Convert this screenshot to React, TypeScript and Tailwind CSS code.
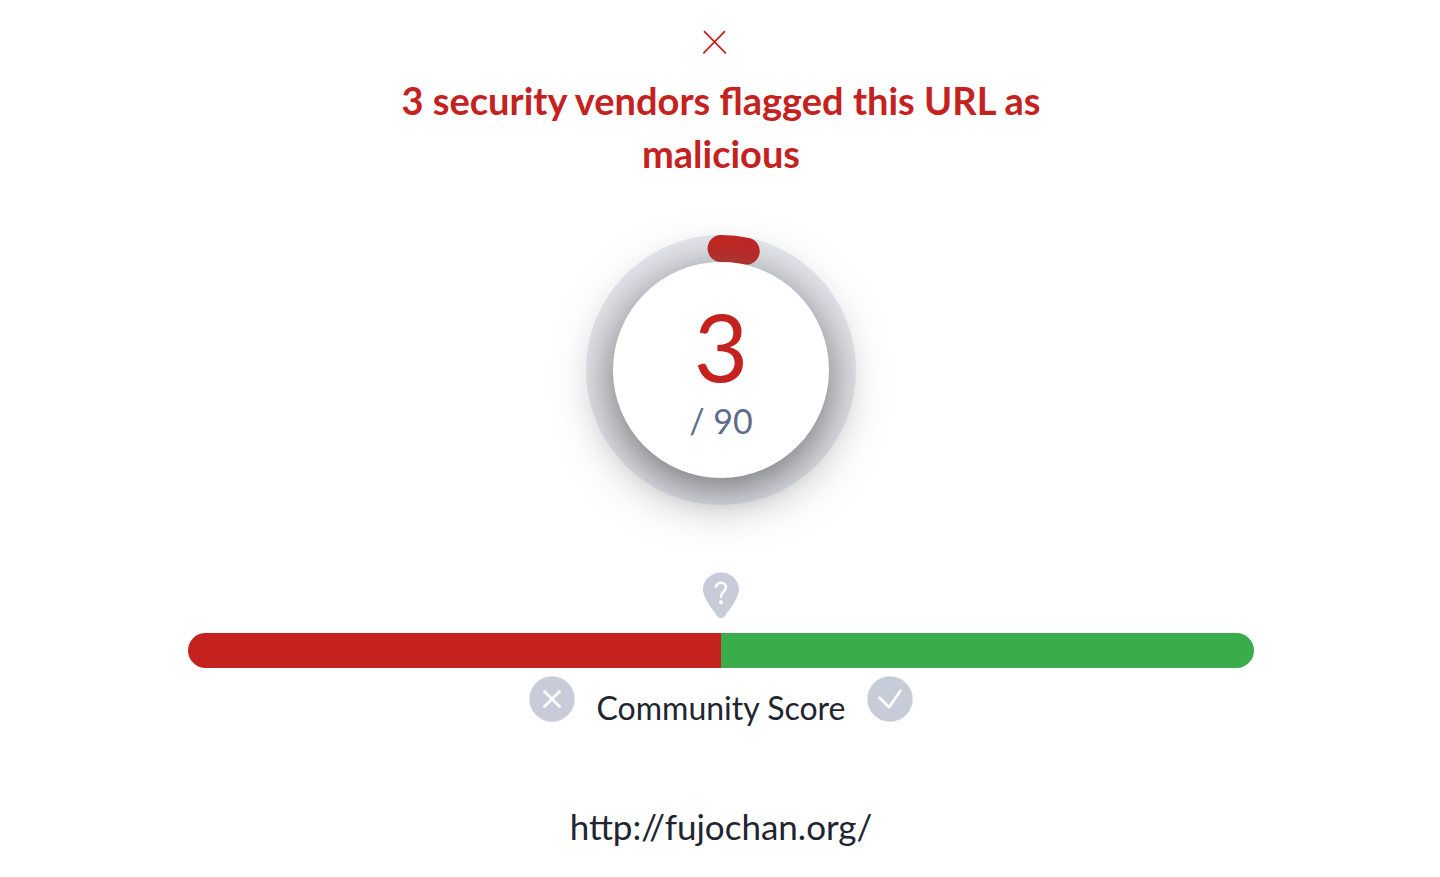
const TOTAL_ENGINES = 90;
const DETECTIONS = 3;

function CloseIcon() {
  return (
    <svg
      className="h-6 w-6"
      viewBox="0 0 24 24"
      fill="none"
      stroke="#c5221f"
      strokeWidth="1.7"
      aria-hidden="true"
    >
      <path d="M0.4 23.4 L22 1.2 M1 1.2 L22.8 23.4" />
    </svg>
  );
}

function DetectionRing({ value, total }: { value: number; total: number }) {
  const radius = 121.5;
  const circumference = 2 * Math.PI * radius;
  const arc = (value / total) * circumference;

  return (
    <div className="relative h-[270px] w-[270px]">
      <svg
        className="h-[270px] w-[270px]"
        viewBox="0 0 270 270"
        fill="none"
        aria-hidden="true"
      >
        <circle cx="135" cy="135" r={radius} stroke="#e8eaf1" strokeWidth="27" />
        <circle
          cx="135"
          cy="135"
          r={radius}
          stroke="#c5221f"
          strokeWidth="27"
          strokeLinecap="round"
          strokeDasharray={`${arc} ${circumference}`}
          transform="rotate(-90 135 135)"
        />
      </svg>
      {/* Score disc, its shadow falls over the ring */}
      <div className="absolute inset-[27px] flex flex-col items-center rounded-full bg-white pt-[30px] shadow-[0_12px_54px_#646464]">
        <div className="text-[94px] leading-[108px] text-[#c5221f]">{value}</div>
        <div className="text-[34px] leading-[42px] text-[#5f6b8a]">
          / {total}
        </div>
      </div>
    </div>
  );
}

function PinIcon() {
  return (
    <svg className="h-[46px] w-9" viewBox="0 0 36 46" fill="none" aria-hidden="true">
      <path
        d="M18 0.5C8 0.5 0 8.2 0 17.6C0 25.5 8.5 36.5 14.6 44.4C16.5 46.6 19.5 46.6 21.4 44.4C27.5 36.5 36 25.5 36 17.6C36 8.2 28 0.5 18 0.5Z"
        fill="#c8ccd8"
      />
      <path
        d="M13 14.8C13.6 12.2 15.5 10.8 18 10.8C20.9 10.8 23 12.7 23 15.4C23 19.4 18 19.9 18 24.8"
        stroke="#fff"
        strokeWidth="2.6"
        strokeLinecap="round"
      />
      <circle cx="18" cy="30.3" r="2" fill="#fff" />
    </svg>
  );
}

function VoteIcon({ path }: { path: string }) {
  return (
    <svg className="h-[46px] w-[46px]" viewBox="0 0 46 46" fill="none" aria-hidden="true">
      <circle cx="23" cy="23" r="22.7" fill="#c8ccd8" />
      <path
        d={path}
        stroke="#fff"
        strokeWidth="2.8"
        strokeLinecap="round"
        strokeLinejoin="round"
      />
    </svg>
  );
}

export default function App() {
  return (
    <main className="flex flex-col items-center bg-white pt-[30px] pb-6 pl-0.5 font-['Lato','Open_Sans',sans-serif] text-[#202530]">
      <button type="button" aria-label="Close" className="mr-3">
        <CloseIcon />
      </button>

      <h1 className="mt-5 max-w-[700px] text-center text-[38px] leading-[53px] font-bold text-[#c5221f]">
        {DETECTIONS} security vendors flagged this URL as malicious
      </h1>

      <div className="mt-[55px]">
        <DetectionRing value={DETECTIONS} total={TOTAL_ENGINES} />
      </div>

      <div className="mt-[67px]">
        <PinIcon />
      </div>

      <div className="mt-[15px] w-full px-[186px]">
        <div className="flex h-[35px] overflow-hidden rounded-full">
          <div className="flex-1 bg-[#c5221f]" />
          <div className="flex-1 bg-[#3bac4b]" />
        </div>
      </div>

      <div className="mt-2 flex items-start gap-[22px]">
        <button type="button" aria-label="Vote malicious">
          <VoteIcon path="M15.5 15.5L30.5 30.5M30.5 15.5L15.5 30.5" />
        </button>
        <span className="pt-3 text-[32px] leading-[40px]">Community Score</span>
        <button type="button" aria-label="Vote harmless">
          <VoteIcon path="M12.5 21.8L22 31.3L33.5 14.8" />
        </button>
      </div>

      <a href="http://fujochan.org/" className="mt-[74px] text-[35px] leading-[48px]">
        http://fujochan.org/
      </a>
    </main>
  );
}
